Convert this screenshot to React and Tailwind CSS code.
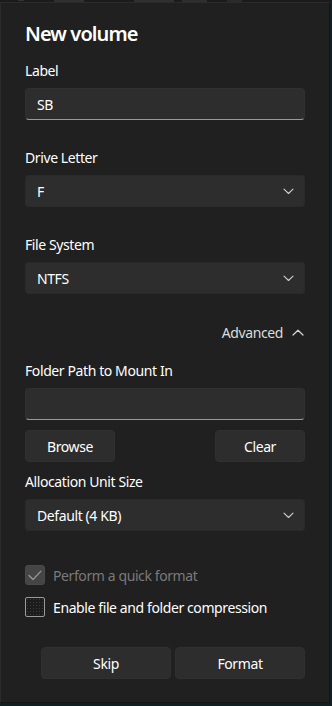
import React from "react";

const font = { fontFamily: '"Segoe UI", "Noto Sans", "Open Sans", sans-serif' };

function ChevronDown() {
  return (
    <svg width="11" height="7" viewBox="0 0 11 7" fill="none">
      <path d="M1 1.2 L5.5 5.5 L10 1.2" stroke="#cfcfcf" strokeWidth="1.1" strokeLinecap="round" strokeLinejoin="round" />
    </svg>
  );
}

function ChevronUp() {
  return (
    <svg width="12" height="7" viewBox="0 0 12 7" fill="none">
      <path d="M1 6 L6 1.2 L11 6" stroke="#d6d6d6" strokeWidth="1.2" strokeLinecap="round" strokeLinejoin="round" />
    </svg>
  );
}

function Label({ children, className = "" }) {
  return <div className={"h-5 text-[14px] leading-5 tracking-[-0.4px] text-white " + className}>{children}</div>;
}

function TextBox({ value }) {
  return (
    <div className="mt-[7px] flex h-8 items-center rounded-[4px] border border-[#303030] border-b-[#9a9a9a] bg-[#2d2d2d] px-[11px] text-[14px] tracking-[-0.4px] text-white">
      {value}
    </div>
  );
}

function Select({ value }) {
  return (
    <div className="mt-[7px] flex h-8 items-center justify-between rounded-[3px] border border-[#2a2a2a] bg-[#2d2d2d] pl-[11px] pr-[10px] text-[14px] tracking-[-0.4px] text-white">
      <span>{value}</span>
      <ChevronDown />
    </div>
  );
}

function Button({ children, className = "" }) {
  return (
    <div className={"flex h-8 items-center justify-center rounded-[4px] border border-[#303030] bg-[#2d2d2d] text-[14px] tracking-[-0.4px] text-white " + className}>
      {children}
    </div>
  );
}

export default function App() {
  return (
    <div className="flex h-[706px] w-[332px] flex-col bg-[#0f1f22]" style={font}>
      <div className="flex h-[2px] w-full shrink-0 items-start bg-[#1b1b1b]">
        <div className="ml-[18px] h-[1px] w-[6px] bg-[#333]" />
        <div className="ml-[30px] h-[2px] w-[30px] bg-[#303030]" />
        <div className="ml-[50px] h-[2px] w-[40px] bg-[#303030]" />
        <div className="ml-[8px] h-[2px] w-[25px] bg-[#2e2e2e]" />
        <div className="ml-[20px] h-[2px] w-[15px] bg-[#2a2a2a]" />
      </div>
      <div className="flex h-[701px] w-[330px] flex-col border-l border-t border-[#2b2b2b] border-r-[#141414] border-r border-b border-b-[#161616] bg-[#202020] pl-[24px] pr-[24px]">
        <div className="mt-[17px] h-7 pl-0 text-[20px] font-semibold leading-7 tracking-[-0.9px] text-white">New volume</div>

        <Label className="mt-[13px]">Label</Label>
        <TextBox value="SB" />

        <Label className="mt-[28px]">Drive Letter</Label>
        <Select value="F" />

        <Label className="mt-[28px]">File System</Label>
        <Select value="NTFS" />

        <div className="mt-[28px] flex h-5 items-center justify-end gap-[9px] pr-[1px] text-[14px] tracking-[-0.4px] text-[#dcdcdc]">
          <span>Advanced</span>
          <ChevronUp />
        </div>

        <Label className="mt-[19px]">Folder Path to Mount In</Label>
        <TextBox value="" />

        <div className="mt-[10px] flex justify-between">
          <Button className="w-[90px]">Browse</Button>
          <Button className="w-[90px]">Clear</Button>
        </div>

        <Label className="mt-[10px]">Allocation Unit Size</Label>
        <Select value="Default (4 KB)" />

        <div className="mt-[34px] flex h-5 items-center gap-[8px]">
          <div className="flex h-5 w-5 items-center justify-center rounded-[3px] border border-[#4a4a4a] bg-[#454545]">
            <svg width="14" height="11" viewBox="0 0 14 11" fill="none">
              <path d="M1 5.5 L5 9.5 L13 1.2" stroke="#9a9a9a" strokeWidth="1.2" strokeLinecap="round" strokeLinejoin="round" />
            </svg>
          </div>
          <span className="text-[14px] tracking-[-0.4px] text-[#7a7a7a]">Perform a quick format</span>
        </div>

        <div className="mt-[12px] flex h-5 items-center gap-[8px]">
          <div className="h-5 w-5 rounded-[2px] border border-[#9a9a9a] bg-[#1c1c1c] bg-[radial-gradient(#3c3c3c_0.7px,transparent_0.8px)] bg-[length:3px_3px]" />
          <span className="text-[14px] tracking-[-0.4px] text-white">Enable file and folder compression</span>
        </div>

        <div className="mt-[30px] flex justify-end gap-[4px]">
          <Button className="w-[130px]">Skip</Button>
          <Button className="w-[130px]">Format</Button>
        </div>
      </div>
    </div>
  );
}
